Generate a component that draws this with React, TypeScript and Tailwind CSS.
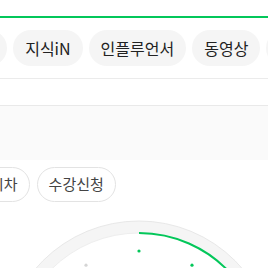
const font = { fontFamily: '"Noto Sans CJK KR", "Noto Sans", sans-serif' };

const tabs = ["이미지", "지식iN", "인플루언서", "동영상", "쇼핑"];
const chips = ["시차", "수강신청"];

function Clock() {
  const cx = 139;
  const cy = 142;
  const arc = (r: number, deg: number) => {
    const a = (deg * Math.PI) / 180;
    return `M ${cx} ${cy - r} A ${r} ${r} 0 0 1 ${cx + r * Math.sin(a)} ${cy - r * Math.cos(a)}`;
  };
  const dot = (h: number) => {
    const a = (h * 30 * Math.PI) / 180;
    return { x: cx + 106 * Math.sin(a), y: cy - 106 * Math.cos(a) };
  };
  return (
    <svg width="268" height="290" className="block">
      <circle cx={cx} cy={cy} r="130" fill="none" stroke="#f5f5f5" strokeWidth="12" />
      <circle cx={cx} cy={cy} r="136" fill="none" stroke="#e8e8e8" strokeWidth="1" />
      <circle cx={cx} cy={cy} r="124" fill="none" stroke="#eeeeee" strokeWidth="1" />
      <path d={arc(124, 100)} fill="none" stroke="#03c75a" strokeWidth="2" />
      {[0, 1, 2].map((h) => {
        const p = dot(h);
        return <circle key={h} cx={p.x} cy={p.y} r="1.6" fill="#03c75a" />;
      })}
      {[10, 11].map((h) => {
        const p = dot(h);
        return <circle key={h} cx={p.x} cy={p.y} r="1.6" fill="#d5d5d5" />;
      })}
    </svg>
  );
}

export default function App() {
  return (
    <div className="w-[268px] h-[268px] overflow-hidden bg-white" style={font}>
      <div className="h-[18px] border-b-2 border-[#03c75a]" />
      <div className="border-b border-[#ebebeb] py-[12px] overflow-hidden">
        <div className="flex gap-[6px] -ml-[61px]">
          {tabs.map((t) => (
            <div
              key={t}
              className="shrink-0 h-9 px-[12px] rounded-full bg-[#f5f5f5] flex items-center text-[16px] text-[#222] whitespace-nowrap"
            >
              {t}
            </div>
          ))}
        </div>
      </div>
      <div className="h-[27px] border-b border-[#e9e9e9]" />
      <div className="h-[54px] bg-[#fafafa]" />
      <div className="pt-[7px] overflow-hidden">
        <div className="flex gap-[7px] -ml-[22px]">
          {chips.map((c) => (
            <div
              key={c}
              className="shrink-0 h-[35px] px-[11px] rounded-full border border-[#e3e3e3] bg-white flex items-center text-[15px] text-[#444] whitespace-nowrap"
            >
              {c}
            </div>
          ))}
        </div>
      </div>
      <div className="mt-[13px]">
        <Clock />
      </div>
    </div>
  );
}
